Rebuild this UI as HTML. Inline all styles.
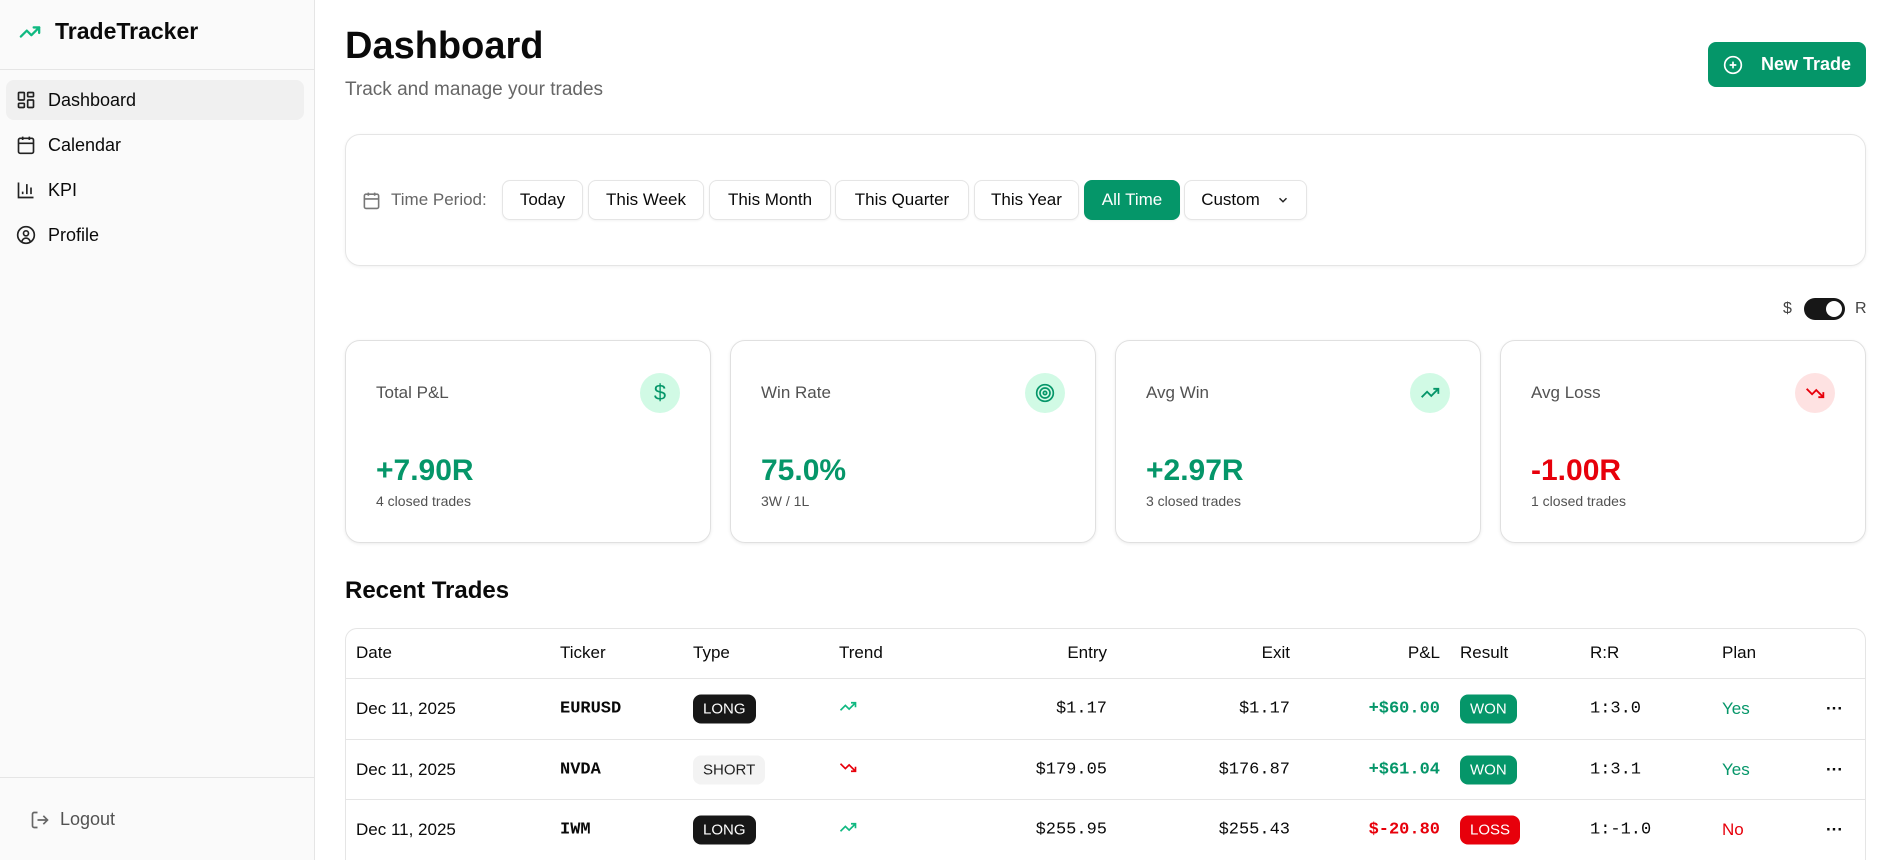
<!DOCTYPE html>
<html style="width:1893px;height:860px;overflow:hidden"><head><meta charset="utf-8"><style>
*{box-sizing:border-box;margin:0;padding:0}
body{width:1893px;height:860px;overflow:hidden;font-family:"Liberation Sans",sans-serif;color:#0a0a0a;background:#fff;position:relative}
.abs{position:absolute}
.side{left:0;top:0;width:315px;height:860px;background:#fafafa;border-right:1px solid #e5e5e5}
.nav{position:absolute;left:6px;width:298px;height:40px;display:flex;align-items:center;padding-left:10px;font-size:18px;border-radius:8px}
.nav svg{margin-right:12px}
.btn{position:absolute;top:180px;height:40px;border:1px solid #e5e5e5;border-radius:8px;background:#fff;font-size:17px;display:flex;align-items:center;justify-content:center;box-shadow:0 1px 2px rgba(0,0,0,.05)}
.card{position:absolute;top:340px;width:366px;height:203px;border:1px solid #e0e0e0;border-radius:15px;box-shadow:0 1px 3px rgba(0,0,0,.08)}
.card .l{position:absolute;left:30px;top:42px;font-size:17px;color:#525252}
.card .ic{position:absolute;right:30px;top:32px;width:40px;height:40px;border-radius:50%;display:flex;align-items:center;justify-content:center}
.card .v{position:absolute;left:30px;top:113px;font-size:30px;font-weight:bold}
.card .s{position:absolute;left:30px;top:152px;font-size:14px;color:#525252}
.g{color:#059669}.r{color:#e7000b}
.row{position:absolute;left:346px;width:1519px;border-top:1px solid #e5e5e5;height:61px}
.c{position:absolute;top:50%;transform:translateY(-50%);font-size:17px;white-space:nowrap}
.m{font-family:"Liberation Mono",monospace}
.pill{padding:6px 10px;border-radius:8px;font-size:15px}
</style></head><body>
<div class="abs side">
  <div class="abs" style="left:15px;top:18px;display:flex;align-items:center">
    <svg width="30" height="22" viewBox="0 0 24 24" fill="none" stroke="#10b981" stroke-width="2.5" stroke-linecap="round" stroke-linejoin="round"><path d="M22 7l-8.5 8.5-5-5L2 17"/><path d="M16 7h6v6"/></svg>
    <span style="font-size:23px;font-weight:bold;margin-left:10px">TradeTracker</span>
  </div>
  <div class="abs" style="left:0;top:69px;width:314px;border-top:1px solid #e5e5e5"></div>
  <div class="nav" style="top:80px;background:#f0f0f0"><svg width="20" height="20" viewBox="0 0 24 24" fill="none" stroke="#222" stroke-width="2"><rect x="3" y="3" width="7" height="9" rx="1"/><rect x="14" y="3" width="7" height="5" rx="1"/><rect x="14" y="12" width="7" height="9" rx="1"/><rect x="3" y="16" width="7" height="5" rx="1"/></svg>Dashboard</div>
  <div class="nav" style="top:125px"><svg width="20" height="20" viewBox="0 0 24 24" fill="none" stroke="#222" stroke-width="2"><rect x="3" y="4" width="18" height="18" rx="2"/><path d="M16 2v4M8 2v4M3 10h18"/></svg>Calendar</div>
  <div class="nav" style="top:170px"><svg width="20" height="20" viewBox="0 0 24 24" fill="none" stroke="#222" stroke-width="2"><path d="M3 3v18h18M18 17V9M13 17V5M8 17v-3"/></svg>KPI</div>
  <div class="nav" style="top:215px"><svg width="20" height="20" viewBox="0 0 24 24" fill="none" stroke="#222" stroke-width="2"><circle cx="12" cy="12" r="10"/><circle cx="12" cy="10" r="3"/><path d="M7 20.7a5 5 0 0 1 10 0"/></svg>Profile</div>
  <div class="abs" style="left:0;top:777px;width:314px;border-top:1px solid #e5e5e5"></div>
  <div class="abs" style="left:30px;top:809px;display:flex;align-items:center;color:#525252;font-size:18px"><svg width="20" height="20" viewBox="0 0 24 24" fill="none" stroke="#666" stroke-width="2"><path d="M9 21H5a2 2 0 0 1-2-2V5a2 2 0 0 1 2-2h4M16 17l5-5-5-5M21 12H9"/></svg><span style="margin-left:10px">Logout</span></div>
</div>

<div class="abs" style="left:345px;top:25px;font-size:38px;font-weight:bold">Dashboard</div>
<div class="abs" style="left:345px;top:79px;font-size:19px;color:#666">Track and manage your trades</div>
<div class="abs" style="left:1708px;top:42px;width:158px;height:45px;background:#059669;border-radius:8px;color:#fff;font-size:18px;font-weight:bold;display:flex;align-items:center;justify-content:center"><svg width="20" height="20" viewBox="0 0 24 24" fill="none" stroke="#fff" stroke-width="2"><circle cx="12" cy="12" r="10"/><path d="M12 8v8M8 12h8"/></svg><span style="margin-left:18px">New Trade</span></div>

<div class="abs" style="left:345px;top:134px;width:1521px;height:132px;border:1px solid #e5e5e5;border-radius:15px;box-shadow:0 1px 3px rgba(0,0,0,.06)"></div>
<div class="abs" style="left:362px;top:190px;display:flex;align-items:center;color:#666;font-size:17px"><svg width="19" height="19" viewBox="0 0 24 24" fill="none" stroke="#777" stroke-width="2"><rect x="3" y="4" width="18" height="18" rx="2"/><path d="M16 2v4M8 2v4M3 10h18"/></svg><span style="margin-left:10px">Time Period:</span></div>
<div class="btn" style="left:502px;width:81px">Today</div>
<div class="btn" style="left:588px;width:116px">This Week</div>
<div class="btn" style="left:709px;width:122px">This Month</div>
<div class="btn" style="left:835px;width:134px">This Quarter</div>
<div class="btn" style="left:974px;width:105px">This Year</div>
<div class="btn" style="left:1084px;width:96px;background:#059669;border-color:#059669;color:#fff">All Time</div>
<div class="btn" style="left:1184px;width:123px">Custom<svg style="margin-left:16px" width="14" height="14" viewBox="0 0 24 24" fill="none" stroke="#222" stroke-width="2.5"><path d="M6 9l6 6 6-6"/></svg></div>

<div class="abs" style="left:1783px;top:300px;font-size:16px;color:#444">$</div>
<div class="abs" style="left:1804px;top:298px;width:41px;height:22px;border-radius:11px;background:#171717"><div style="position:absolute;right:3px;top:3px;width:16px;height:16px;border-radius:50%;background:#fff"></div></div>
<div class="abs" style="left:1855px;top:300px;font-size:16px;color:#444">R</div>

<div class="card" style="left:345px"><div class="l">Total P&amp;L</div><div class="ic" style="background:#d1fae5"><span class="g" style="font-size:22px">$</span></div><div class="v g">+7.90R</div><div class="s">4 closed trades</div></div>
<div class="card" style="left:730px"><div class="l">Win Rate</div><div class="ic" style="background:#d1fae5"><svg width="20" height="20" viewBox="0 0 24 24" fill="none" stroke="#059669" stroke-width="2"><circle cx="12" cy="12" r="10"/><circle cx="12" cy="12" r="6"/><circle cx="12" cy="12" r="2"/></svg></div><div class="v g">75.0%</div><div class="s">3W / 1L</div></div>
<div class="card" style="left:1115px"><div class="l">Avg Win</div><div class="ic" style="background:#d1fae5"><svg width="20" height="20" viewBox="0 0 24 24" fill="none" stroke="#059669" stroke-width="2.2"><path d="M22 7l-8.5 8.5-5-5L2 17"/><path d="M16 7h6v6"/></svg></div><div class="v g">+2.97R</div><div class="s">3 closed trades</div></div>
<div class="card" style="left:1500px"><div class="l">Avg Loss</div><div class="ic" style="background:#fee2e2"><svg width="20" height="20" viewBox="0 0 24 24" fill="none" stroke="#e7000b" stroke-width="2.2"><path d="M22 17l-8.5-8.5-5 5L2 7"/><path d="M16 17h6v-6"/></svg></div><div class="v r">-1.00R</div><div class="s">1 closed trades</div></div>

<div class="abs" style="left:345px;top:577px;font-size:24px;font-weight:bold">Recent Trades</div>
<div class="abs" style="left:345px;top:628px;width:1521px;height:232px;border:1px solid #e5e5e5;border-bottom:none;border-radius:12px 12px 0 0"></div>
<div class="row" style="top:628px;height:50px;border-top:none">
  <span class="c" style="left:10px">Date</span><span class="c" style="left:214px">Ticker</span><span class="c" style="left:347px">Type</span><span class="c" style="left:493px">Trend</span>
  <span class="c" style="right:758px">Entry</span><span class="c" style="right:575px">Exit</span><span class="c" style="right:425px">P&amp;L</span>
  <span class="c" style="left:1114px">Result</span><span class="c" style="left:1244px">R:R</span><span class="c" style="left:1376px">Plan</span>
</div>
<div class="row" style="top:678px">
  <span class="c" style="left:10px">Dec 11, 2025</span><span class="c m" style="left:214px;font-weight:bold">EURUSD</span>
  <span class="c pill" style="left:347px;background:#171717;color:#fff">LONG</span>
  <span class="c" style="left:493px"><svg width="18" height="18" viewBox="0 0 24 24" fill="none" stroke="#10b981" stroke-width="2.2"><path d="M22 7l-8.5 8.5-5-5L2 17"/><path d="M16 7h6v6"/></svg></span>
  <span class="c m" style="right:758px">$1.17</span><span class="c m" style="right:575px">$1.17</span><span class="c m g" style="right:425px;font-weight:bold">+$60.00</span>
  <span class="c pill" style="left:1114px;background:#059669;color:#fff">WON</span><span class="c m" style="left:1244px">1:3.0</span><span class="c g" style="left:1376px">Yes</span><span class="c" style="left:1480px;font-weight:bold">···</span>
</div>
<div class="row" style="top:739px">
  <span class="c" style="left:10px">Dec 11, 2025</span><span class="c m" style="left:214px;font-weight:bold">NVDA</span>
  <span class="c pill" style="left:347px;background:#f3f3f3;color:#222">SHORT</span>
  <span class="c" style="left:493px"><svg width="18" height="18" viewBox="0 0 24 24" fill="none" stroke="#e7000b" stroke-width="2.2"><path d="M22 17l-8.5-8.5-5 5L2 7"/><path d="M16 17h6v-6"/></svg></span>
  <span class="c m" style="right:758px">$179.05</span><span class="c m" style="right:575px">$176.87</span><span class="c m g" style="right:425px;font-weight:bold">+$61.04</span>
  <span class="c pill" style="left:1114px;background:#059669;color:#fff">WON</span><span class="c m" style="left:1244px">1:3.1</span><span class="c g" style="left:1376px">Yes</span><span class="c" style="left:1480px;font-weight:bold">···</span>
</div>
<div class="row" style="top:799px">
  <span class="c" style="left:10px">Dec 11, 2025</span><span class="c m" style="left:214px;font-weight:bold">IWM</span>
  <span class="c pill" style="left:347px;background:#171717;color:#fff">LONG</span>
  <span class="c" style="left:493px"><svg width="18" height="18" viewBox="0 0 24 24" fill="none" stroke="#10b981" stroke-width="2.2"><path d="M22 7l-8.5 8.5-5-5L2 17"/><path d="M16 7h6v6"/></svg></span>
  <span class="c m" style="right:758px">$255.95</span><span class="c m" style="right:575px">$255.43</span><span class="c m r" style="right:425px;font-weight:bold">$-20.80</span>
  <span class="c pill" style="left:1114px;background:#e7000b;color:#fff">LOSS</span><span class="c m" style="left:1244px">1:-1.0</span><span class="c r" style="left:1376px">No</span><span class="c" style="left:1480px;font-weight:bold">···</span>
</div>
</body></html>
